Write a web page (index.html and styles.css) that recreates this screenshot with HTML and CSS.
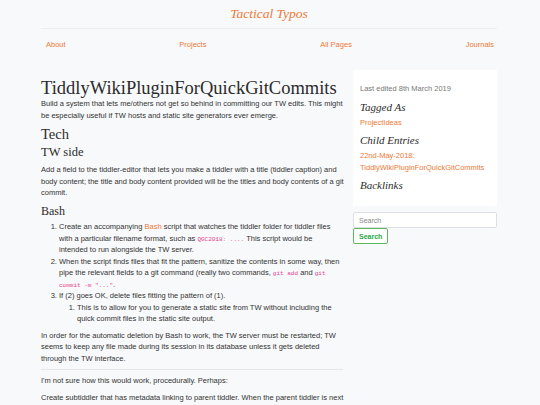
FILE: index.html
```html
<!DOCTYPE html>
<html>
<head>
<meta charset="utf-8">
<link rel="stylesheet" href="styles.css">
</head>
<body>
<div class="page">
  <header class="site-header">
    <div class="brand"><a href="#">Tactical Typos</a></div>
    <nav class="nav">
      <a href="#">About</a>
      <a href="#">Projects</a>
      <a href="#">All Pages</a>
      <a href="#">Journals</a>
    </nav>
  </header>
  <div class="layout">
    <main class="article">
      <h1>TiddlyWikiPluginForQuickGitCommits</h1>
      <p>Build a system that lets me/others not get so behind in committing our TW edits. This might be especially useful if TW hosts and static site generators ever emerge.</p>
      <h2>Tech</h2>
      <h3>TW side</h3>
      <p>Add a field to the tiddler-editor that lets you make a tiddler with a title (tiddler caption) and body content; the title and body content provided will be the titles and body contents of a git commit.</p>
      <h4>Bash</h4>
      <ol>
        <li>Create an accompanying <a href="#">Bash</a> script that watches the tiddler folder for tiddler files with a particular filename format, such as <code>QGC2018: ....</code> This script would be intended to run alongside the TW server.</li>
        <li>When the script finds files that fit the pattern, sanitize the contents in some way, then pipe the relevant fields to a git command (really two commands, <code>git add</code> and <code>git commit -m "..."</code>.</li>
        <li>If (2) goes OK, delete files fitting the pattern of (1).
          <ol>
            <li>This is to allow for you to generate a static site from TW without including the quick commit files in the static site output.</li>
          </ol>
        </li>
      </ol>
      <p>In order for the automatic deletion by Bash to work, the TW server must be restarted; TW seems to keep any file made during its session in its database unless it gets deleted through the TW interface.</p>
      <hr>
      <p>I'm not sure how this would work, procedurally. Perhaps:</p>
      <p>Create subtiddler that has metadata linking to parent tiddler. When the parent tiddler is next saved, the subtiddler is committed too.</p>
    </main>
    <aside class="sidebar">
      <div class="card">
        <p class="edited">Last edited 8th March 2019</p>
        <h5>Tagged As</h5>
        <p><a href="#">ProjectIdeas</a></p>
        <h5>Child Entries</h5>
        <p><a href="#">22nd-May-2018: TiddlyWikiPluginForQuickGitCommits</a></p>
        <h5>Backlinks</h5>
      </div>
      <form class="search">
        <input type="text" placeholder="Search">
        <button type="button">Search</button>
      </form>
    </aside>
  </div>
</div>
</body>
</html>
```
FILE: styles.css
```css
html, body {
  margin: 0;
  padding: 0;
}
body {
  background: #f8f9fb;
  color: #333;
  font-family: "Liberation Sans", Arial, sans-serif;
  font-size: 7.5px;
  line-height: 11.5px;
}
a {
  color: #ec7a37;
  text-decoration: none;
}
.page {
  width: 456px;
  margin-left: 41px;
}
.brand {
  text-align: center;
  font-family: "Liberation Serif", Georgia, serif;
  font-style: italic;
  font-size: 13.5px;
  line-height: 16px;
  padding-top: 6px;
  padding-bottom: 6px;
  border-bottom: 1px solid #eceef1;
}
.nav {
  display: flex;
  justify-content: space-between;
  padding: 11px 3px 0 5px;
  font-size: 7.5px;
  line-height: 10px;
}
.layout {
  display: flex;
  margin-top: 20px;
  gap: 9px;
  align-items: flex-start;
}
.article {
  width: 303px;
  flex: none;
}
.sidebar {
  flex: 1;
}
h1, h2, h3, h4, h5 {
  font-family: "Liberation Serif", Georgia, serif;
  font-weight: normal;
  color: #2b2b2b;
  margin: 0;
}
h1 {
  font-size: 18.5px;
  line-height: 20px;
  margin-top: 8px;
  margin-bottom: 0;
}
h2 {
  font-size: 14.5px;
  line-height: 16px;
  margin-top: 2px;
}
h3 {
  font-size: 12.5px;
  line-height: 16px;
  margin-top: 2px;
  margin-bottom: 4px;
}
h4 {
  font-size: 12px;
  line-height: 14px;
  margin-top: 1px;
  margin-bottom: 3.5px;
}
p {
  margin: 0 0 5px;
}
ol {
  margin: 0 0 5px;
  padding-left: 18px;
  padding-right: 2px;
}
ol ol {
  margin: 0;
  padding-right: 0;
}
code {
  font-family: "Liberation Mono", monospace;
  font-size: 6px;
  line-height: 1;
  color: #e83e8c;
}
hr {
  border: 0;
  border-top: 1px solid #e5e7ea;
  margin: 5px 1px 5px 0;
}
.card {
  background: #fff;
  padding: 13px 7px 11px;
}
.edited {
  color: #777;
  margin-bottom: 3px;
}
h5 {
  font-style: italic;
  font-size: 11px;
  line-height: 15px;
  margin-bottom: 2px;
}
.card p {
  margin-bottom: 5px;
}
.search {
  margin-top: 6px;
}
.search input {
  display: block;
  box-sizing: border-box;
  width: 100%;
  height: 16px;
  border: 1px solid #dcdfe3;
  border-radius: 2px;
  padding: 0 5px;
  font-family: "Liberation Sans", Arial, sans-serif;
  font-size: 7px;
  background: #fff;
}
.search input::placeholder {
  color: #888;
}
.search button {
  display: block;
  height: 16px;
  padding: 0 5px;
  border: 1px solid #5cb85c;
  border-radius: 2px;
  background: #fff;
  color: #28a745;
  font-family: "Liberation Sans", Arial, sans-serif;
  font-weight: bold;
  font-size: 7px;
}
```
